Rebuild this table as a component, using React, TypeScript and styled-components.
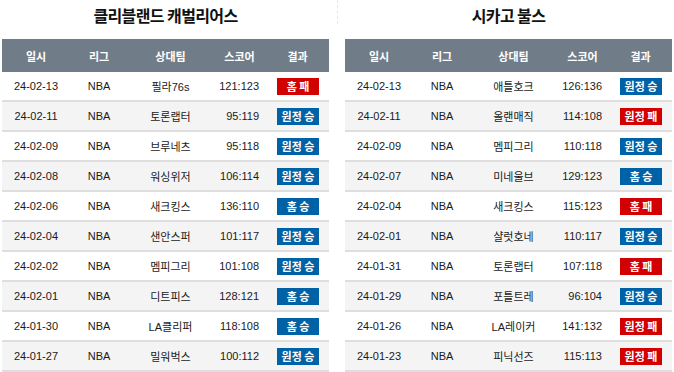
import styled, { createGlobalStyle } from "styled-components";

type Game = {
  date: string;
  opponent: string;
  score: string;
  place: "홈" | "원정";
  win: boolean;
};

const cavs: Game[] = [
  { date: "24-02-13", opponent: "필라76s", score: "121:123", place: "홈", win: false },
  { date: "24-02-11", opponent: "토론랩터", score: "95:119", place: "원정", win: true },
  { date: "24-02-09", opponent: "브루네츠", score: "95:118", place: "원정", win: true },
  { date: "24-02-08", opponent: "워싱위저", score: "106:114", place: "원정", win: true },
  { date: "24-02-06", opponent: "새크킹스", score: "136:110", place: "홈", win: true },
  { date: "24-02-04", opponent: "샌안스퍼", score: "101:117", place: "원정", win: true },
  { date: "24-02-02", opponent: "멤피그리", score: "101:108", place: "원정", win: true },
  { date: "24-02-01", opponent: "디트피스", score: "128:121", place: "홈", win: true },
  { date: "24-01-30", opponent: "LA클리퍼", score: "118:108", place: "홈", win: true },
  { date: "24-01-27", opponent: "밀워벅스", score: "100:112", place: "원정", win: true },
];

const bulls: Game[] = [
  { date: "24-02-13", opponent: "애틀호크", score: "126:136", place: "원정", win: true },
  { date: "24-02-11", opponent: "올랜매직", score: "114:108", place: "원정", win: false },
  { date: "24-02-09", opponent: "멤피그리", score: "110:118", place: "원정", win: true },
  { date: "24-02-07", opponent: "미네울브", score: "129:123", place: "홈", win: true },
  { date: "24-02-04", opponent: "새크킹스", score: "115:123", place: "홈", win: false },
  { date: "24-02-01", opponent: "샬럿호네", score: "110:117", place: "원정", win: true },
  { date: "24-01-31", opponent: "토론랩터", score: "107:118", place: "홈", win: false },
  { date: "24-01-29", opponent: "포틀트레", score: "96:104", place: "원정", win: true },
  { date: "24-01-26", opponent: "LA레이커", score: "141:132", place: "원정", win: false },
  { date: "24-01-23", opponent: "피닉선즈", score: "115:113", place: "원정", win: false },
];

const GlobalStyle = createGlobalStyle`
  body {
    margin: 0;
    background: #fff;
    font-family: "Liberation Sans", "Noto Sans CJK KR", sans-serif;
    color: #222;
  }
`;

const Page = styled.div`
  display: flex;
  padding: 0 2px;
  width: 674px;
  box-sizing: border-box;
`;

const Column = styled.section`
  width: 327px;
  display: flex;
  flex-direction: column;
`;

// dashed line between the two team titles
const Divider = styled.div`
  width: 16px;
  display: flex;
  justify-content: center;

  &::before {
    content: "";
    width: 0;
    height: 24px;
    border-left: 1px dashed #e6e6e6;
    margin-left: 1px;
  }
`;

const Title = styled.h2`
  margin: 0 0 9px;
  height: 30px;
  line-height: 30px;
  text-align: center;
  font-family: "Noto Sans CJK KR", sans-serif;
  font-size: 16px;
  font-weight: 600;
  letter-spacing: -0.6px;
  color: #111;
`;

const Table = styled.table`
  width: 327px;
  border-collapse: collapse;
  table-layout: fixed;
  font-size: 11px;
`;

const Head = styled.th`
  height: 33px;
  padding: 0;
  background: #707d89;
  color: #fff;
  font-weight: 700;
  font-family: "Noto Sans CJK KR", sans-serif;
  text-align: center;
`;

const Row = styled.tr<{ $alt: boolean }>`
  background: ${(p) => (p.$alt ? "#f4f4f4" : "#fff")};
  border-bottom: 2px solid #dedede;
`;

const Cell = styled.td<{ $align?: "right" | "center" }>`
  height: 28px;
  padding: 0 ${(p) => (p.$align === "right" ? "7px" : "0")} 0 0;
  text-align: ${(p) => p.$align ?? "center"};
  color: #1a1a1a;
  white-space: nowrap;
`;

const Badge = styled.span<{ $win: boolean }>`
  display: inline-block;
  width: 42px;
  height: 17px;
  line-height: 17px;
  margin-left: 1px;
  background: ${(p) => (p.$win ? "#0062a6" : "#d20000")};
  color: #fff;
  font-family: "Noto Sans CJK KR", sans-serif;
  font-size: 11px;
  font-weight: 700;
  text-align: center;
  vertical-align: middle;
`;

const widths = [68, 58, 85, 53, 63];
const headers = ["일시", "리그", "상대팀", "스코어", "결과"];

function Schedule({ team, games }: { team: string; games: Game[] }) {
  return (
    <Column>
      <Title>{team}</Title>
      <Table>
        <colgroup>
          {widths.map((w, i) => (
            <col key={i} style={{ width: w }} />
          ))}
        </colgroup>
        <thead>
          <tr>
            {headers.map((h) => (
              <Head key={h}>{h}</Head>
            ))}
          </tr>
        </thead>
        <tbody>
          {games.map((g, i) => (
            <Row key={g.date} $alt={i % 2 === 1}>
              <Cell>{g.date}</Cell>
              <Cell>NBA</Cell>
              <Cell>{g.opponent}</Cell>
              <Cell $align="right">{g.score}</Cell>
              <Cell>
                <Badge $win={g.win}>
                  {g.place} {g.win ? "승" : "패"}
                </Badge>
              </Cell>
            </Row>
          ))}
        </tbody>
      </Table>
    </Column>
  );
}

export default function App() {
  return (
    <>
      <GlobalStyle />
      <Page>
        <Schedule team="클리블랜드 캐벌리어스" games={cavs} />
        <Divider />
        <Schedule team="시카고 불스" games={bulls} />
      </Page>
    </>
  );
}
